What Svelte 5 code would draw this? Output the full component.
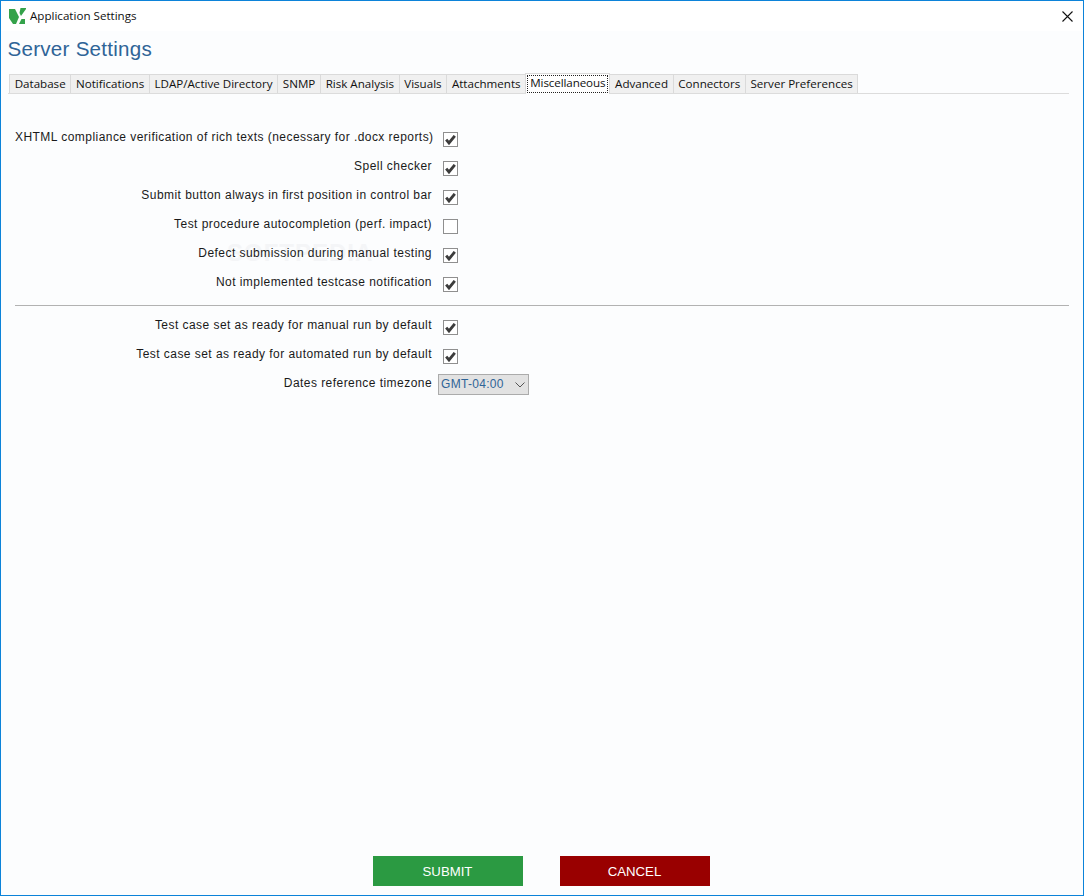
<script>
  const tabs = [
    'Database', 'Notifications', 'LDAP/Active Directory', 'SNMP', 'Risk Analysis', 'Visuals',
    'Attachments', 'Miscellaneous', 'Advanced', 'Connectors', 'Server Preferences'
  ];
  const activeTab = 'Miscellaneous';

  const firstGroup = [
    { label: 'XHTML compliance verification of rich texts (necessary for .docx reports)', on: true },
    { label: 'Spell checker', on: true },
    { label: 'Submit button always in first position in control bar', on: true },
    { label: 'Test procedure autocompletion (perf. impact)', on: false },
    { label: 'Defect submission during manual testing', on: true },
    { label: 'Not implemented testcase notification', on: true }
  ];
  const secondGroup = [
    { label: 'Test case set as ready for manual run by default', on: true },
    { label: 'Test case set as ready for automated run by default', on: true }
  ];
</script>

{#snippet checkRow(item)}
  <div class="row">
    <span class="label">{item.label}</span>
    <span class="box">
      {#if item.on}
        <svg width="11" height="10" viewBox="0 0 11 10">
          <path d="M1.2 4.6 L4 8 L9.8 0.8" fill="none" stroke="#3c3c3c" stroke-width="2.8" />
        </svg>
      {/if}
    </span>
  </div>
{/snippet}

<div class="window">
  <header class="titlebar">
    <svg class="logo" width="17" height="17" viewBox="0 0 17 17">
      <path d="M0 1 H6 L10 9 L7 16 H4 L0 10 Z" fill="#34a24a" />
      <path d="M11.5 0 H17 V1 L12 8 L10.5 5 Z" fill="#34a24a" />
      <path d="M12.5 11 H16 V16 H10 Z" fill="#34a24a" />
    </svg>
    <span class="app-title">Application Settings</span>
    <svg class="close" width="11" height="11" viewBox="0 0 11 11">
      <path d="M0.5 0.5 L10.5 10.5 M10.5 0.5 L0.5 10.5" stroke="#111" stroke-width="1.1" />
    </svg>
  </header>

  <main class="content">
    <h1>Server Settings</h1>

    <nav class="tabs">
      {#each tabs as tab}
        <div class="tab" class:active={tab === activeTab}><span>{tab}</span></div>
      {/each}
    </nav>

    <section class="form">
      <div class="watermark">SOFTPEDIA</div>
      {#each firstGroup as item}
        {@render checkRow(item)}
      {/each}
      <hr />
      {#each secondGroup as item}
        {@render checkRow(item)}
      {/each}
      <div class="row tz">
        <span class="label">Dates reference timezone</span>
        <div class="select">
          <span>GMT-04:00</span>
          <svg width="10" height="6" viewBox="0 0 10 6">
            <path d="M0.5 0.5 L5 5 L9.5 0.5" fill="none" stroke="#555" stroke-width="1" />
          </svg>
        </div>
      </div>
    </section>

    <footer class="actions">
      <button class="submit">SUBMIT</button>
      <button class="cancel">CANCEL</button>
    </footer>
  </main>
</div>

<style>
  :global(body) {
    margin: 0;
  }

  .window {
    box-sizing: border-box;
    width: 1084px;
    height: 896px;
    border: 1px solid #0c83d9;
    display: flex;
    flex-direction: column;
    background: #fcfdfe;
    overflow: hidden;
  }

  .titlebar {
    flex: none;
    height: 30px;
    display: flex;
    align-items: center;
    padding: 0 10px 0 8px;
    background: #fff;
    font: 11.6px "Open Sans", sans-serif;
    color: #111;
  }

  .logo {
    margin-right: 4px;
  }

  .app-title {
    flex: 1;
    margin-top: -1px;
  }

  .content {
    flex: 1;
    display: flex;
    flex-direction: column;
    min-height: 0;
  }

  h1 {
    margin: 5px 0 0 6.5px;
    height: 26px;
    font: 400 20.6px/26px "Liberation Sans", sans-serif;
    letter-spacing: 0.25px;
    color: #2f6497;
  }

  .tabs {
    display: flex;
    align-items: flex-end;
    height: 20px;
    margin: 11px 14px 0 7px;
    padding-left: 1px;
    border-bottom: 1px solid #dcdcdc;
  }

  .tab {
    box-sizing: border-box;
    height: 19px;
    padding: 0 4.65px;
    margin-right: -1px;
    border: 1px solid #dadada;
    border-bottom: none;
    background: #f0f0f0;
    font: 11.6px/17px "Open Sans", sans-serif;
    color: #111;
    white-space: nowrap;
  }

  .tab.active {
    height: 21px;
    margin-bottom: -1px;
    padding: 1px 1px 0;
    background: #fff;
    line-height: 14px;
    letter-spacing: -0.1px;
  }

  .tab.active span {
    display: block;
    padding: 0 2px;
    height: 16px;
    border: 1px dotted #222;
  }

  .form {
    position: relative;
    flex: 1;
    padding: 31px 14px 0;
  }

  .watermark {
    position: absolute;
    left: 226px;
    top: 145px;
    font: 700 24px "Liberation Sans", sans-serif;
    letter-spacing: 1px;
    color: #f4f5f7;
  }

  .row {
    position: relative;
    height: 29px;
    display: flex;
    align-items: center;
  }

  .label {
    width: 417px;
    text-align: right;
    font: 12px "Liberation Sans", sans-serif;
    letter-spacing: 0.45px;
    color: #1a1a1a;
    margin-top: -5px;
    white-space: nowrap;
  }

  .box {
    box-sizing: border-box;
    width: 15px;
    height: 15px;
    margin-left: 11px;
    border: 1px solid #8f8f8f;
    background: #fff;
    display: flex;
    align-items: center;
    justify-content: center;
  }

  hr {
    margin: 6px 0 7px;
    border: none;
    border-top: 1px solid #b2b2b2;
  }

  .select {
    box-sizing: border-box;
    width: 91px;
    height: 21px;
    margin-left: 6px;
    margin-top: -3px;
    padding: 0 3px 1px 2px;
    border: 1px solid #ababab;
    background: #e2e2e2;
    display: flex;
    align-items: center;
    justify-content: space-between;
    font: 12px "Liberation Sans", sans-serif;
    letter-spacing: 0.3px;
    color: #2f6497;
  }

  .select svg {
    margin-top: 2px;
  }

  .actions {
    flex: none;
    display: flex;
    gap: 37px;
    justify-content: center;
    padding: 0 0 9px 0;
    margin-left: -2px;
  }

  button {
    width: 150px;
    height: 30px;
    border: none;
    padding: 0;
    color: #fff;
    font: 13.2px "Liberation Sans", sans-serif;
  }

  .submit {
    background: #2b9a42;
  }

  .cancel {
    background: #990000;
  }
</style>
